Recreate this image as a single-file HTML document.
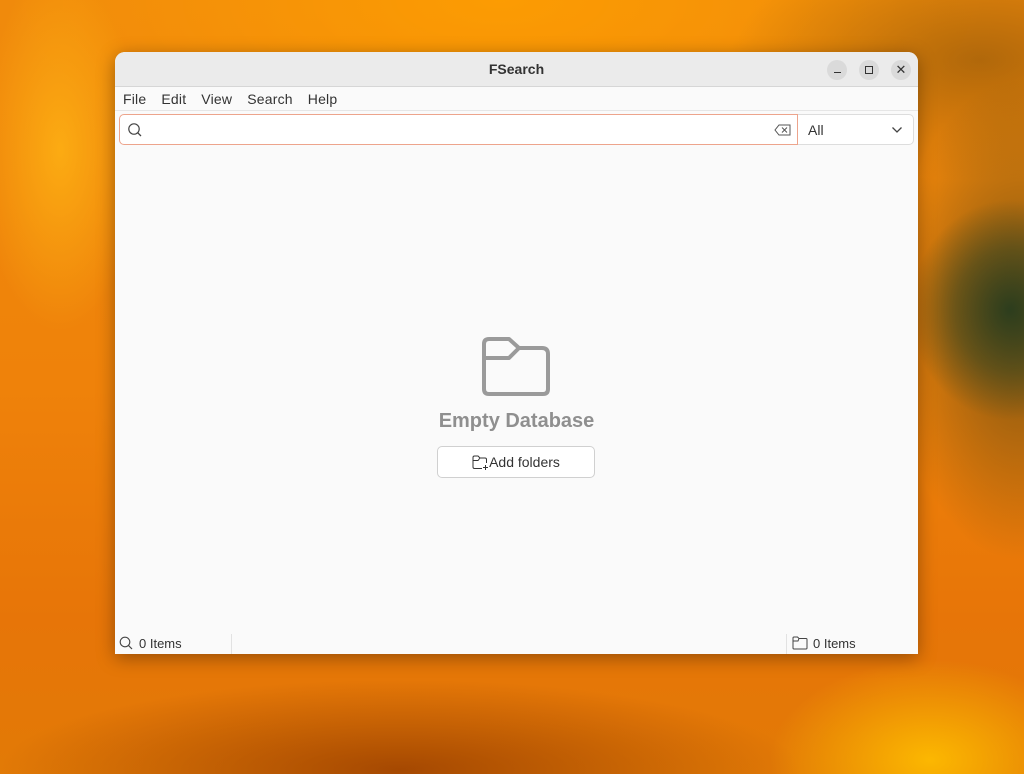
<!DOCTYPE html>
<html><head><meta charset="utf-8"><style>
*{box-sizing:border-box;margin:0;padding:0}
html,body{width:1024px;height:774px;overflow:hidden}
body{position:relative;font-family:"Liberation Sans","DejaVu Sans",sans-serif;
background:
radial-gradient(ellipse 100px 110px at 1010px 310px,rgba(40,60,30,.95),rgba(60,70,30,.6) 55%,rgba(60,70,30,0) 100%),
radial-gradient(ellipse 130px 240px at 1020px 320px,rgba(90,70,20,.8),rgba(120,80,10,0) 100%),
radial-gradient(ellipse 250px 120px at 980px 60px,rgba(150,90,10,.7),rgba(150,90,10,0) 100%),
radial-gradient(ellipse 400px 90px at 400px 770px,rgba(150,60,0,.8),rgba(150,60,0,0) 100%),
radial-gradient(ellipse 160px 100px at 930px 760px,rgba(255,190,0,.9),rgba(255,190,0,0) 100%),
radial-gradient(ellipse 80px 180px at 60px 150px,rgba(255,180,20,.8),rgba(255,180,20,0) 100%),
radial-gradient(ellipse 500px 200px at 500px 0px,rgba(255,160,0,.8),rgba(255,160,0,0) 100%),
linear-gradient(180deg,#f08a0c 0%,#ef820a 50%,#e77508 80%,#e27a06 100%);}
.win{position:absolute;left:115px;top:52px;width:803px;height:602px;background:#fafafa;border-radius:10px 10px 0 0;box-shadow:0 4px 18px rgba(0,0,0,.35);overflow:hidden}
.title{height:35px;background:#ebebeb;border-bottom:1px solid #d6d6d6;position:relative;text-align:center;font-weight:bold;font-size:14px;line-height:34px;color:#333}
.wb{position:absolute;top:8px;width:20px;height:20px;border-radius:50%;background:#dadada}
.menu{height:24px;background:#fafafa;border-bottom:1px solid #e6e6e6;font-size:14px;color:#333;line-height:24px;padding-left:8px;letter-spacing:.2px}
.menu span{margin-right:15px}
.search{position:absolute;left:4px;top:62px;width:679px;height:31px;border:1px solid #eda48c;border-radius:5px 0 0 5px;background:#fff}
.all{position:absolute;left:683px;top:62px;width:116px;height:31px;border:1px solid #ddd;border-left:none;border-radius:0 5px 5px 0;background:#fff;font-size:14px;color:#333;line-height:30px;padding-left:10px}
.empty{position:absolute;left:0;width:803px;text-align:center}
.btn{position:absolute;left:322px;top:394px;width:158px;height:32px;border:1px solid #d0d0d0;border-radius:5px;background:#fff;font-size:14px;color:#333;line-height:30px;text-align:center}
.status{position:absolute;bottom:0;left:0;width:803px;height:22px;font-size:13px;color:#333;line-height:22px}
</style></head><body>
<div class="win">
 <div class="title">FSearch
  <div class="wb" style="left:712px"><div style="position:absolute;left:7px;top:12px;width:7px;height:1px;background:#333"></div></div>
  <div class="wb" style="left:744px"><div style="position:absolute;left:6px;top:6px;width:8px;height:8px;border:1px solid #333"></div></div>
  <div class="wb" style="left:776px;font-weight:normal;font-size:13px;line-height:20px;color:#333">✕</div>
 </div>
 <div class="menu"><span>File</span><span>Edit</span><span>View</span><span>Search</span><span>Help</span></div>
 <div class="search">
  <svg style="position:absolute;left:7px;top:7px" width="16" height="16" viewBox="0 0 16 16"><circle cx="7" cy="7" r="5.2" fill="none" stroke="#444" stroke-width="1.2"/><path d="M10.8 10.8 14 14" stroke="#444" stroke-width="1.3"/></svg>
  <svg style="position:absolute;left:654px;top:9px" width="18" height="12" viewBox="0 0 18 12"><path d="M5 1H16V11H5L1 6Z" fill="none" stroke="#555" stroke-width="1"/><path d="M8 3.5 13 8.5M13 3.5 8 8.5" stroke="#555" stroke-width="1"/></svg>
 </div>
 <div class="all">All<svg style="position:absolute;right:10px;top:11px" width="12" height="8" viewBox="0 0 12 8"><path d="M1.5 1.5 6 6 10.5 1.5" fill="none" stroke="#444" stroke-width="1.3"/></svg></div>
 <svg style="position:absolute;left:366px;top:284px" width="70" height="62" viewBox="0 0 70 62"><path d="M3 8Q3 3 8 3H28L38 12H61Q67 12 67 18V53Q67 58 62 58H8Q3 58 3 53Z M3 22H28L38 12" fill="none" stroke="#9a9a9a" stroke-width="4" stroke-linejoin="round"/></svg>
 <div class="empty" style="top:358px;font-size:20px;font-weight:bold;color:#8f8f8f">Empty Database</div>
 <div class="btn"><svg style="vertical-align:-3px" width="17" height="15" viewBox="0 0 17 15"><path d="M1 2.5Q1 1 2.5 1H6L8 3H13Q14.5 3 14.5 4.5V8M10 13.5H2.5Q1 13.5 1 12V2.5M1 5.5H6L8 3" fill="none" stroke="#333" stroke-width="1"/><path d="M13.5 10V15M11 12.5H16" stroke="#333" stroke-width="1"/></svg>Add folders</div>
 <div class="status">
  <svg style="position:absolute;left:4px;top:4px" width="14" height="14" viewBox="0 0 14 14"><circle cx="6" cy="6" r="4.8" fill="none" stroke="#444" stroke-width="1.1"/><path d="M9.5 9.5 13 13" stroke="#444" stroke-width="1.2"/></svg>
  <span style="position:absolute;left:24px;top:1px">0 Items</span>
  <div style="position:absolute;left:116px;top:2px;width:1px;height:20px;background:#e2e2e2"></div>
  <div style="position:absolute;left:671px;top:2px;width:1px;height:20px;background:#e2e2e2"></div>
  <svg style="position:absolute;left:677px;top:4px" width="16" height="14" viewBox="0 0 16 14"><path d="M1 2Q1 1 2 1H5.5L7 2.5H14Q15 2.5 15 3.5V12Q15 13 14 13H2Q1 13 1 12Z M1 5H6L7 2.5" fill="none" stroke="#444" stroke-width="1"/></svg>
  <span style="position:absolute;left:698px;top:1px">0 Items</span>
 </div>
</div>
</body></html>
